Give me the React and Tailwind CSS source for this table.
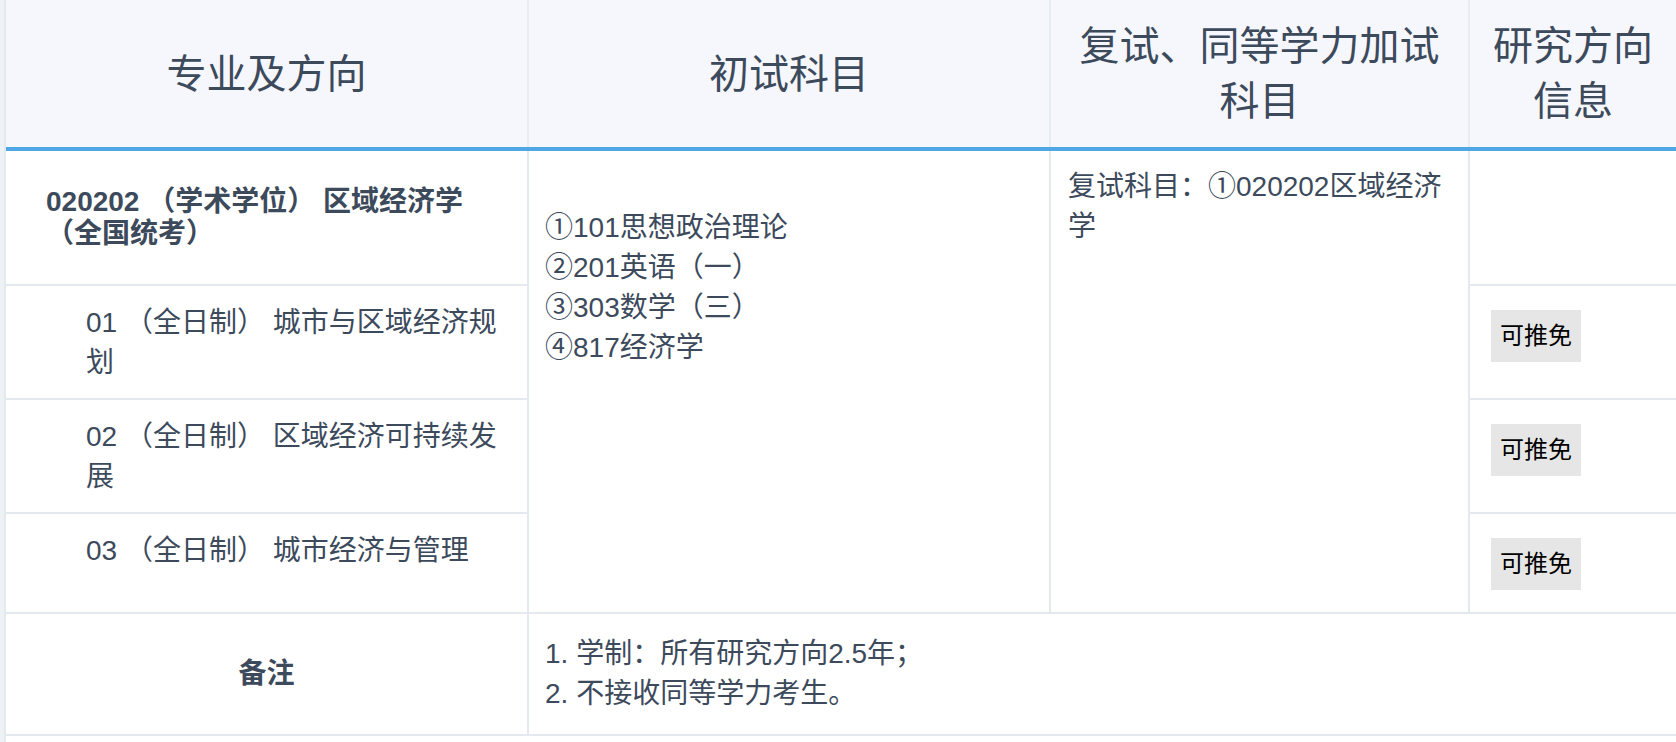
const FONT = { fontFamily: '"Liberation Sans", "Noto Sans CJK SC", sans-serif' };

const DIRECTIONS = [
  { code: "01", text: "01 （全日制） 城市与区域经济规划" },
  { code: "02", text: "02 （全日制） 区域经济可持续发展" },
  { code: "03", text: "03 （全日制） 城市经济与管理" },
];

const FIRST_EXAMS = ["①101思想政治理论", "②201英语（一）", "③303数学（三）", "④817经济学"];

function Badge() {
  return (
    <span className="inline-flex h-[52px] items-center bg-[#e6e6e6] px-[9px] text-[24px] text-black">
      可推免
    </span>
  );
}

export default function App() {
  return (
    <div className="flex min-h-screen w-[1676px] overflow-hidden bg-white text-[#3c4a5c]" style={FONT}>
      <div className="w-[4px] shrink-0 bg-[#eef2f5]" />
      <div className="flex-1 border-l-2 border-[#e3e9ee]">
        {/* header */}
        <div className="grid h-[147px] grid-cols-[521px_520px_417px_1fr] gap-x-[2px] bg-[#e8edf1] text-[40px]">
          <div className="flex items-center justify-center bg-[#f5f7fc]">专业及方向</div>
          <div className="flex items-center justify-center bg-[#f5f7fc]">初试科目</div>
          <div className="flex items-center justify-center bg-[#f5f7fc] px-[20px] text-center leading-[55px]">
            复试、同等学力加试科目
          </div>
          <div className="flex items-center justify-center bg-[#f5f7fc] px-[20px] text-center leading-[55px]">
            研究方向信息
          </div>
        </div>
        <div className="h-[4px] bg-[#4fa7e6]" />

        {/* body */}
        <div className="grid grid-cols-[521px_520px_417px_1fr] grid-rows-[133px_112px_112px_98px_120px] gap-[2px] border-b-2 border-[#e3e9ee] bg-[#e3e9ee] text-[28px] leading-[40px]">
          <div className="flex items-center bg-white pl-[40px] pr-[16px] font-bold leading-[32px]">
            020202 （学术学位） 区域经济学（全国统考）
          </div>
          <div className="row-span-4 bg-white pl-[16px] pt-[57px]">
            {FIRST_EXAMS.map((item) => (
              <div key={item}>{item}</div>
            ))}
          </div>
          <div className="row-span-4 bg-white px-[17px] pt-[16px]">复试科目：①020202区域经济学</div>
          <div className="bg-white" />

          {DIRECTIONS.map((d, i) => (
            <div
              key={d.code}
              className={`bg-white pl-[80px] pr-[16px] pt-[17px] ${i === 0 ? "row-start-2" : i === 1 ? "row-start-3" : "row-start-4"} col-start-1`}
            >
              {d.text}
            </div>
          ))}
          {DIRECTIONS.map((d, i) => (
            <div
              key={d.code + "b"}
              className={`bg-white pl-[21px] pt-[24px] ${i === 0 ? "row-start-2" : i === 1 ? "row-start-3" : "row-start-4"} col-start-4`}
            >
              <Badge />
            </div>
          ))}

          <div className="row-start-5 flex items-center justify-center bg-white font-bold">备注</div>
          <div className="col-span-3 row-start-5 flex flex-col justify-center bg-white pl-[16px]">
            <div>1. 学制：所有研究方向2.5年；</div>
            <div>2. 不接收同等学力考生。</div>
          </div>
        </div>
      </div>
    </div>
  );
}
